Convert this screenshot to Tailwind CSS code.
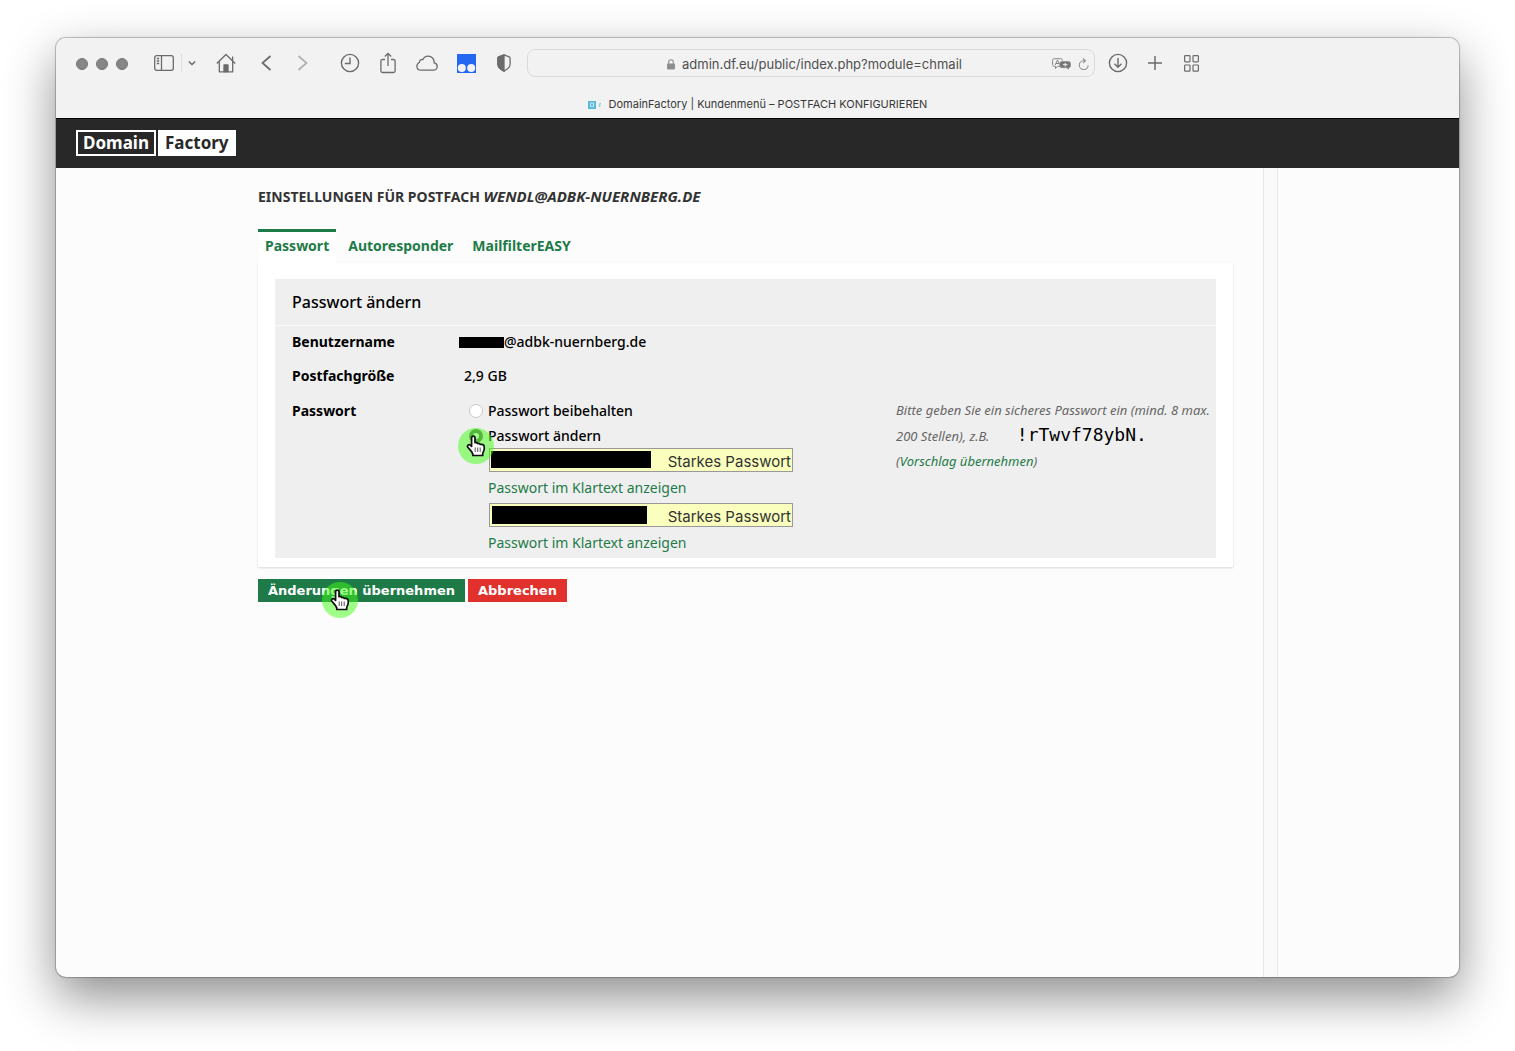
<!DOCTYPE html>
<html lang="de">
<head>
<meta charset="utf-8">
<meta name="viewport" content="width=device-width, initial-scale=1">
<title>DomainFactory | Kundenmenü – POSTFACH KONFIGURIEREN</title>
<script src="https://cdn.jsdelivr.net/npm/@tailwindcss/browser@4"></script>
</head>
<body class="flex min-h-screen flex-col bg-white px-14 pt-[38px] pb-[74px] font-['Noto_Sans',sans-serif] text-sm font-medium text-black">
<svg class="hidden" aria-hidden="true">
  <symbol id="hand" viewBox="0 0 20 22">
    <path d="M7.300 1.200c1 0 1.700.7 1.700 1.700v4.800c1-.5 2.200-.1 2.600.8 1-.4 2.200 0 2.600.9 1.500-.3 4 .2 4 2v2.800c0 1.600-1.500 2.800-1.500 4.800v1.500H6.800v-1.500C6.200 16.700 3.500 14.200 1.800 12.200.8 10.500 2.800 8.900 4.300 10.100L5.600 11.400V2.900c0-1 .7-1.700 1.700-1.700z" fill="#fff" stroke="#111" stroke-width="1.700" stroke-linejoin="round"/>
    <path d="M9.200 12.500v4.500M11.700 12.500v4.500M14.200 12.500v4.500" stroke="#555" stroke-width="1" fill="none"/>
  </symbol>
</svg>
<div class="flex flex-1 flex-col overflow-hidden rounded-[10px] bg-[#fcfcfc] shadow-[0_0_1px_1px_rgba(0,0,0,0.25),0_20px_50px_rgba(0,0,0,0.45)]">

  <div class="border-b border-black bg-[#f2f2f2] font-[Inter,sans-serif] font-normal text-[#6b6b6b]">
    <div class="flex h-[50px] items-center pl-5">
      <div class="flex gap-2 pt-px">
        <span class="size-3 rounded-full border border-[#777] bg-[#868686]"></span>
        <span class="size-3 rounded-full border border-[#777] bg-[#868686]"></span>
        <span class="size-3 rounded-full border border-[#777] bg-[#868686]"></span>
      </div>
      <button class="ml-[26px]" aria-label="Seitenleiste"><svg class="h-4 w-5" viewBox="0 0 20 16" fill="none" stroke="currentColor" stroke-width="1.300"><rect x=".7" y=".7" width="18.600" height="14.600" rx="2"/><path d="M7.500.7v14.600M2.800 3.500h2.400M2.800 6h2.400M2.800 8.500h2.400"/></svg></button>
      <span class="ml-[7px] h-[18px] w-px bg-[#dedede]"></span>
      <button class="ml-1.5" aria-label="Tabgruppen"><svg class="h-2 w-2" viewBox="0 0 8 8" fill="none" stroke="currentColor" stroke-width="1.500"><path d="M.8 2.500 4 5.500 7.200 2.500"/></svg></button>
      <button class="ml-5" aria-label="Startseite"><svg class="h-5 w-5" viewBox="0 0 20 20" fill="none" stroke="currentColor" stroke-width="1.300" stroke-linejoin="round"><path d="M.8 10.500 10 1.500l9.200 9M3.300 8.500V18.800h13.400V8.500M16.600 8V3.500"/><path d="M8 18.500V12h4v6.500z" fill="currentColor"/></svg></button>
      <button class="ml-[25px]" aria-label="Zurück"><svg class="h-4 w-[11px]" viewBox="0 0 11 16" fill="none" stroke="currentColor" stroke-width="1.700"><path d="M9.500 1 1.500 8l8 7"/></svg></button>
      <button class="ml-[25px] text-[#b0b0b0]" aria-label="Vorwärts"><svg class="h-4 w-[11px]" viewBox="0 0 11 16" fill="none" stroke="currentColor" stroke-width="1.700"><path d="m1.500 1 8 7-8 7"/></svg></button>
      <button class="ml-8" aria-label="Verlauf"><svg class="size-5" viewBox="0 0 20 20" fill="none" stroke="currentColor" stroke-width="1.400"><circle cx="10" cy="10" r="8.600"/><path d="M10 4.500V10.500H4.800"/></svg></button>
      <button class="ml-5" aria-label="Teilen"><svg class="h-[22px] w-4" viewBox="0 0 16 22" fill="none" stroke="currentColor" stroke-width="1.300"><path d="M5 7.500H2.500C1.500 7.500.9 8 .9 9v10c0 1 .6 1.500 1.600 1.500h11c1 0 1.600-.5 1.600-1.500V9c0-1-.6-1.500-1.600-1.500H11M8 14V1.500M4.800 4.500 8 1.300l3.200 3.200"/></svg></button>
      <button class="ml-5" aria-label="iCloud"><svg class="h-4 w-[22px]" viewBox="0 0 22 16" fill="none" stroke="currentColor" stroke-width="1.300"><path d="M5 15.200h12.500c2 0 3.700-1.600 3.700-3.700 0-1.900-1.300-3.300-3-3.600.2-4-2.600-6.800-6-6.800-2.500 0-4.400 1.300-5.300 3.500-1.900-.4-3.500.8-3.600 2.900C1.800 8.100.9 9.600.9 11.200c0 2.300 1.700 4 4.100 4z"/></svg></button>
      <button class="ml-[19px]" aria-label="Erweiterung"><svg class="size-[19px]" viewBox="0 0 19 19"><path fill="#2468f2" d="M0 0h19v19H0z"/><circle cx="4.800" cy="14" r="4" fill="#f2f2f2"/><circle cx="14.200" cy="14" r="4" fill="#f2f2f2"/></svg></button>
      <button class="ml-[21px]" aria-label="Datenschutzbericht"><svg class="h-[18px] w-[14px]" viewBox="0 0 14 18" fill="none" stroke="currentColor" stroke-width="1.300"><path d="M7 .9 12.200 2.900c.6.300.9.600.9 1.300v6c0 3-2.500 5-6.100 6.900C3.400 15.200.9 13.200.9 10.200v-6c0-.7.3-1 .9-1.300z"/><path d="M7 .9v16.200C3.400 15.200.9 13.200.9 10.200v-6c0-.7.3-1 .9-1.300z" fill="currentColor"/></svg></button>
      <div class="ml-4 flex h-7 flex-1 items-center rounded-lg border border-[#dadada] pt-0.5 pr-[5px]">
        <svg class="ml-[139px] h-[11px] w-2" viewBox="0 0 8 11"><rect y="4.500" width="8" height="6" rx="1" fill="#8e8e8e"/><path d="M1.700 5V3a2.300 2.300 0 0 1 4.600 0v2" fill="none" stroke="#8e8e8e" stroke-width="1.100"/></svg>
        <input type="text" aria-label="Adresse" value="admin.df.eu/public/index.php?module=chmail" class="ml-[7px] min-w-0 flex-1 bg-transparent text-[13px] text-[#4f4f4f] outline-none">
        <button aria-label="Übersetzen"><svg class="h-3 w-[19px]" viewBox="0 0 19 12" fill="none" stroke="#858585"><path d="M9 8.300H5.500L3.500 10.500V8.300H2.500C1.200 8.300.6 7.700.6 6.500v-4C.6 1.300 1.200.7 2.500.7h6C9.800.7 10.400 1.300 10.400 2.500M3.200 7 5.500 2l2 4.500M4 5.500h3"/><path d="M9.500 3.700h7c1.200 0 1.800.5 1.800 1.600V8c0 1.100-.6 1.600-1.800 1.600V11l-1.800-1.400H9.500C8.600 9.600 8 9.100 8 8V5.300c0-1.100.6-1.600 1.500-1.600z" fill="#777"/><path d="M11 6.700h4.500M13.200 4.800v3.800" stroke="#f2f2f2"/></svg></button>
        <button class="ml-[7px]" aria-label="Neu laden"><svg class="h-3 w-[11px]" viewBox="0 0 11 12" fill="none" stroke="#909090" stroke-width="1.100"><path d="M7 2.800H5.500a4.400 4.400 0 1 0 4.600 4.400M5 .5l2.500 2.300L5 5.200"/></svg></button>
      </div>
      <button class="ml-[13px]" aria-label="Downloads"><svg class="size-5" viewBox="0 0 20 20" fill="none" stroke="currentColor" stroke-width="1.400"><circle cx="10" cy="10" r="8.600"/><path d="M10 5v9M6.500 10.700l3.500 3.500 3.500-3.500"/></svg></button>
      <button class="ml-5" aria-label="Neuer Tab"><svg class="size-[14px]" viewBox="0 0 14 14" stroke="currentColor" stroke-width="1.500"><path d="M7 0v14M0 7h14"/></svg></button>
      <button class="mr-[260px] ml-[22px]" aria-label="Tabübersicht"><svg class="h-[17px] w-[15px]" viewBox="0 0 15 17" fill="none" stroke="currentColor" stroke-width="1.200"><rect x=".6" y=".7" width="5.400" height="6.200" rx=".8"/><rect x="9" y=".7" width="5.400" height="6.200" rx=".8"/><rect x=".6" y="10" width="5.400" height="6.200" rx=".8"/><rect x="9" y="10" width="5.400" height="6.200" rx=".8"/></svg></button>
    </div>
    <div class="flex h-[30px] items-center justify-center gap-2 pt-1 text-[11px] text-[#383838]">
      <svg class="h-2 w-[13px]" viewBox="0 0 13 8"><path fill="#5bb8dc" d="M0 0h8v8H0z"/><path d="M2.500 2h3v3.500h-3z" fill="none" stroke="#c9e8f4"/><path d="M11.500 6V2.500H13M11.500 4.300H13" fill="none" stroke="#8fd0e8"/></svg>
      <span>DomainFactory | Kundenmenü – POSTFACH KONFIGURIEREN</span>
    </div>
  </div>

  <header class="flex h-[49px] items-center bg-[#282828] px-5 pb-0.5">
    <a href="#" class="flex gap-0.5 text-[17px] leading-[22px] font-bold">
      <span class="border-2 border-white px-[5px] text-white">Domain</span>
      <span class="border-2 border-white bg-white px-[5px] text-[#282828]">Factory</span>
    </a>
  </header>

  <div class="flex flex-1">
    <main class="flex-1 pt-[15px] pr-[30px] pl-[202px]">
      <h1 class="text-sm leading-[26px] font-bold text-[#333]">EINSTELLUNGEN FÜR POSTFACH <em class="text-[15px]">WENDL@ADBK-NUERNBERG.DE</em></h1>

      <nav class="mt-[19px] flex gap-[5px] font-bold text-[#1e7b48]">
        <a href="#" class="h-[34px] border-t-[3px] border-[#1e7b48] bg-white px-[7px] leading-7">Passwort</a>
        <a href="#" class="border-t-[3px] border-transparent px-[7px] leading-7">Autoresponder</a>
        <a href="#" class="border-t-[3px] border-transparent px-[7px] leading-7">MailfilterEASY</a>
      </nav>

      <form>
        <div class="bg-white px-[17px] pt-4 pb-[9px] shadow-[0_1px_2px_rgba(0,0,0,0.15)]">
          <section class="bg-[#efefef]">
            <h2 class="border-b border-[#f9f9f9] px-[17px] text-base leading-[46px]">Passwort ändern</h2>
            <dl class="-mt-px grid grid-cols-[172px_1fr] pl-[17px] leading-[34px]">
              <dt class="font-bold">Benutzername</dt>
              <dd class="flex items-center"><span class="-ml-[5px] h-[11px] w-[45px] bg-black"></span>@adbk-nuernberg.de</dd>
              <dt class="font-bold">Postfachgröße</dt>
              <dd>2,9 GB</dd>
            </dl>
            <div class="flex pt-[5px] pl-[17px] leading-[25px]">
              <div class="w-[172px] font-bold">Passwort</div>
              <div class="relative flex-1">
                <label class="flex items-center gap-[5px]"><input type="radio" name="mode" class="ml-[5px] size-[14px] appearance-none rounded-full border border-[#c8c8c8] bg-white">Passwort beibehalten</label>
                <label class="flex items-center gap-[5px]"><input type="radio" name="mode" checked class="ml-[5px] size-[14px] appearance-none rounded-full border-4 border-[#6b6b6b] bg-white">Passwort ändern</label>
                <div class="pl-6 text-[#1e7b48]">
                  <div class="relative ml-px flex h-6 w-[304px] items-center border border-[#999] bg-[#faffbd] pr-px">
                    <input type="password" aria-label="Neues Passwort" class="min-w-0 flex-1 bg-transparent outline-none">
                    <span class="pt-[3px] font-[Inter,sans-serif] text-[15px] leading-5 font-normal text-[#333]">Starkes Passwort</span>
                    <span class="absolute top-0.5 left-px h-[17px] w-40 bg-black"></span>
                  </div>
                  <a href="#" class="block leading-[31px] font-normal">Passwort im Klartext anzeigen</a>
                  <div class="relative ml-px flex h-6 w-[304px] items-center border border-[#999] bg-[#faffbd] pr-px">
                    <input type="password" aria-label="Passwort wiederholen" class="min-w-0 flex-1 bg-transparent outline-none">
                    <span class="pt-[3px] font-[Inter,sans-serif] text-[15px] leading-5 font-normal text-[#333]">Starkes Passwort</span>
                    <span class="absolute top-0.5 left-0.5 h-[18px] w-[155px] bg-black"></span>
                  </div>
                  <a href="#" class="block leading-[31px] font-normal">Passwort im Klartext anzeigen</a>
                </div>
                <span class="absolute top-[30px] -left-1.5 grid size-9 place-items-center rounded-full bg-[#3fff14]/50"><svg class="h-[22px] w-5"><use href="#hand"/></svg></span>
              </div>
              <p class="w-80 text-[13px] leading-[25px] font-normal text-[#666] italic">Bitte geben Sie ein sicheres Passwort ein (mind. 8 max.<br>200 Stellen), z.B. <code class="ml-6 font-['DejaVu_Sans_Mono',monospace] text-lg leading-6 text-black not-italic">!rTwvf78ybN.</code><br>(<a href="#" class="text-[#1e7b48]">Vorschlag übernehmen</a>)</p>
            </div>
          </section>
        </div>
        <div class="relative mt-3 flex gap-[3px] font-['DejaVu_Sans',sans-serif] text-[13px] leading-[23px] font-bold text-white">
          <button type="submit" class="bg-[#1e7b48] px-2.5">Änderungen übernehmen</button>
          <button type="button" class="bg-[#e0312d] px-2.5">Abbrechen</button>
          <span class="absolute top-[3px] left-16 grid size-9 place-items-center rounded-full bg-[#3fff14]/50"><svg class="h-[22px] w-5"><use href="#hand"/></svg></span>
        </div>
      </form>
    </main>
    <div class="w-[15px] border-x border-[#e8e8e8] bg-[#fafafa]"></div>
    <aside class="w-[181px]"></aside>
  </div>
</div>
</body>
</html>
